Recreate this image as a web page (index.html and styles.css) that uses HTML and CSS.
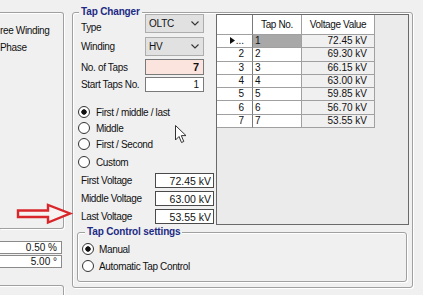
FILE: index.html
```html
<!DOCTYPE html>
<html lang="en">
<head>
    <meta charset="UTF-8">
    <title>Tap Changer</title>
    <link rel="stylesheet" href="styles.css">
</head>
<body>
<div class="screen">
    <div class="side">
        <div class="side-box side-top">
            <div class="side-opt">ree Winding</div>
            <div class="side-opt">Phase</div>
        </div>
        <div class="side-fields">
            <input class="side-input" type="text" value="0.50 %" readonly>
            <input class="side-input" type="text" value="5.00 °" readonly>
        </div>
        <div class="side-box side-low"></div>
    </div>

    <div class="group tap-changer">
        <div class="group-title">Tap Changer</div>
        <div class="tc-body">
            <div class="tc-form">
                <div class="field f-type">
                    <span class="field-label">Type</span>
                    <div class="sel">OLTC
                        <svg width="8" height="5" viewBox="0 0 8 5"><path d="M0.5 0.5 L4 4 L7.5 0.5" fill="none" stroke="#333" stroke-width="1.1"/></svg>
                    </div>
                </div>
                <div class="field f-winding">
                    <span class="field-label">Winding</span>
                    <div class="sel">HV
                        <svg width="8" height="5" viewBox="0 0 8 5"><path d="M0.5 0.5 L4 4 L7.5 0.5" fill="none" stroke="#333" stroke-width="1.1"/></svg>
                    </div>
                </div>
                <div class="field f-taps">
                    <span class="field-label">No. of Taps</span>
                    <input class="num num-hi" type="text" value="7" readonly>
                </div>
                <div class="field f-start">
                    <span class="field-label">Start Taps No.</span>
                    <input class="num" type="text" value="1" readonly>
                </div>

                <div class="options">
                    <label class="radio"><input type="radio" name="mode" checked>First / middle / last</label>
                    <label class="radio"><input type="radio" name="mode">Middle</label>
                    <label class="radio"><input type="radio" name="mode">First / Second</label>
                    <label class="radio opt-custom"><input type="radio" name="mode">Custom</label>
                </div>

                <div class="vfield">
                    <span class="vfield-label">First Voltage</span>
                    <input class="volt" type="text" value="72.45 kV" readonly>
                </div>
                <div class="vfield">
                    <span class="vfield-label">Middle Voltage</span>
                    <input class="volt" type="text" value="63.00 kV" readonly>
                </div>
                <div class="vfield">
                    <span class="vfield-label">Last Voltage</span>
                    <input class="volt" type="text" value="53.55 kV" readonly>
                </div>
            </div>

            <div class="grid-box">
                <table class="grid">
                    <thead>
                        <tr>
                            <th class="c-row"></th>
                            <th class="c-tap">Tap No.</th>
                            <th class="c-volt">Voltage Value</th>
                        </tr>
                    </thead>
                    <tbody>
                        <tr>
                            <td class="c-row"><svg class="row-mark" width="5" height="7" viewBox="0 0 5 7"><path d="M0 0 L5 3.5 L0 7 Z" fill="#111"/></svg>...</td>
                            <td class="c-tap selected">1</td>
                            <td class="c-volt">72.45 kV</td>
                        </tr>
                        <tr><td class="c-row">2</td><td class="c-tap">2</td><td class="c-volt">69.30 kV</td></tr>
                        <tr><td class="c-row">3</td><td class="c-tap">3</td><td class="c-volt">66.15 kV</td></tr>
                        <tr><td class="c-row">4</td><td class="c-tap">4</td><td class="c-volt">63.00 kV</td></tr>
                        <tr><td class="c-row">5</td><td class="c-tap">5</td><td class="c-volt">59.85 kV</td></tr>
                        <tr><td class="c-row">6</td><td class="c-tap">6</td><td class="c-volt">56.70 kV</td></tr>
                        <tr><td class="c-row">7</td><td class="c-tap">7</td><td class="c-volt">53.55 kV</td></tr>
                    </tbody>
                </table>
            </div>
        </div>

        <div class="group tap-control">
            <div class="group-title">Tap Control settings</div>
            <label class="radio r-manual"><input type="radio" name="ctrl" checked>Manual</label>
            <label class="radio r-auto"><input type="radio" name="ctrl">Automatic Tap Control</label>
        </div>
    </div>

    <!-- annotation arrow -->
    <svg class="red-arrow" width="58" height="22" viewBox="0 0 58 22">
        <path d="M2 7.5 L32 7.5 L32 2 L54 10.5 L32 19.5 L32 14 L2 14 Z" fill="#f7f3f3" stroke="#d8262b" stroke-width="2.4" stroke-linejoin="miter"/>
    </svg>

    <!-- mouse pointer -->
    <svg class="pointer" width="13" height="19" viewBox="0 0 13 19">
        <path d="M0.5 0.5 L0.5 15 L4 11.5 L6.5 17.5 L8.8 16.5 L6.3 10.6 L11 10.6 Z" fill="#fff" stroke="#333" stroke-width="1"/>
    </svg>
</div>
</body>
</html>
```

FILE: styles.css
```css
body {
    margin: 0;
    background-color: #f0f0f0;
    font-family: "Liberation Sans", Arial, sans-serif;
    font-size: 10px;
    color: #111;
}
.screen {
    position: relative;
    display: flex;
    width: 423px;
    height: 295px;
    overflow: hidden;
}

/* left column, cut by the window edge */
.side {
    flex: none;
    width: 64px;
}
.side-box {
    box-sizing: border-box;
    border: 1px solid #a0a0a0;
    border-left: none;
    border-radius: 0 3px 3px 0;
    box-shadow: inset 0 1px 0 #fff, 1px 1px 0 #fff;
}
.side-top {
    margin-top: 12px;
    height: 217px;
}
.side-opt {
    line-height: 12px;
    letter-spacing: -0.35px;
    margin-top: 5px;
}
.side-opt:first-child {
    margin-top: 12px;
}
.side-fields {
    display: flex;
    flex-direction: column;
    gap: 1px;
    margin-top: 12px;
}
.side-input {
    box-sizing: border-box;
    width: 62px;
    height: 13px;
    margin: 0;
    padding: 0 4px 0 0;
    border: 1px solid #8a8a8a;
    border-left: none;
    background-color: #fff;
    font: inherit;
    text-align: right;
    color: #111;
}
.side-low {
    margin-top: 17px;
    height: 30px;
}

/* group boxes */
.group {
    box-sizing: border-box;
    border: 1px solid #a0a0a0;
    border-radius: 3px;
    box-shadow: inset 1px 1px 0 #fff, 1px 1px 0 #fff;
}
.group-title {
    width: fit-content;
    margin: -7px 0 -5px 6px;
    padding: 0 2px;
    line-height: 12px;
    font-weight: bold;
    letter-spacing: -0.15px;
    color: #1d2b85;
    background-color: #f0f0f0;
}
.tap-changer {
    flex: none;
    width: 341px;
    height: 276px;
    margin: 12px 0 0 8px;
}
.tc-body {
    display: flex;
    height: 212px;
}
.tc-form {
    box-sizing: border-box;
    width: 143px;
}

.field {
    display: flex;
    align-items: center;
    padding-left: 8px;
}
.field-label {
    width: 64px;
    letter-spacing: -0.35px;
}
.f-type {
    margin-top: 1px;
}
.f-type .field-label {
    align-self: flex-end;
}
.f-winding {
    margin-top: 4px;
}
.f-taps {
    margin-top: 3px;
}
.f-start {
    margin-top: 2px;
}
.sel {
    box-sizing: border-box;
    display: flex;
    align-items: center;
    justify-content: space-between;
    width: 59px;
    height: 19px;
    padding: 0 4px 0 3px;
    border: 1px solid #adadad;
    background-color: #e1e1e1;
    letter-spacing: -0.2px;
}
.num {
    box-sizing: border-box;
    width: 59px;
    height: 16px;
    margin: 0;
    padding: 0 4px;
    border: 1px solid #7a7a7a;
    background-color: #fff;
    font: inherit;
    text-align: right;
    color: #111;
}
.num-hi {
    background-color: #fbe3de;
    font-weight: bold;
    font-size: 11px;
}
.f-start .num {
    height: 15px;
}

.options {
    margin-top: 12px;
}
.radio {
    display: flex;
    align-items: center;
    gap: 6px;
    height: 16px;
    padding-left: 5px;
    letter-spacing: -0.35px;
}
.radio input {
    appearance: none;
    box-sizing: border-box;
    width: 12px;
    height: 12px;
    margin: 0;
    border: 1px solid #333;
    border-radius: 50%;
    background-color: #fff;
}
.radio input:checked {
    background: radial-gradient(circle, #111 0 2.4px, #fff 3px);
}
.opt-custom {
    margin-top: 2px;
}

.vfield {
    display: flex;
    align-items: center;
    padding-left: 8px;
    margin-top: 3px;
}
.vfield:first-of-type {
    margin-top: 0;
}
.vfield-label {
    width: 74px;
    letter-spacing: -0.35px;
}
.volt {
    box-sizing: border-box;
    width: 59px;
    height: 15px;
    margin: 0;
    padding: 0 2px;
    border: 1px solid #4a4a4a;
    background-color: #fff;
    font: inherit;
    font-size: 10.5px;
    text-align: right;
    color: #111;
}

/* data grid */
.grid-box {
    box-sizing: border-box;
    width: 193px;
    height: 211px;
    margin-top: 1px;
    border: 1px solid #6a6a6a;
    background-color: #ebebeb;
}
.grid {
    border-collapse: separate;
    border-spacing: 0;
    table-layout: fixed;
    width: 158px;
}
.grid th,
.grid td {
    box-sizing: border-box;
    padding: 0;
    border-right: 1px solid #a0a0a0;
    border-bottom: 1px solid #a0a0a0;
    background-color: #fff;
    font-weight: normal;
    white-space: nowrap;
    overflow: hidden;
}
.grid th {
    height: 20px;
    text-align: center;
    letter-spacing: -0.35px;
}
.grid td {
    height: 13.3px;
    line-height: 12px;
}
.c-row {
    width: 36px;
    text-align: right;
    padding-right: 8px !important;
    border-right-color: #7a7a7a !important;
}
.c-tap {
    width: 49px;
}
td.c-tap {
    padding-left: 2px !important;
}
.c-volt {
    width: 73px;
}
td.c-volt {
    text-align: right;
    padding-right: 7px !important;
    background-color: #f0f0f0 !important;
}
td.selected {
    background-color: #a8a8a8;
}
.row-mark {
    margin-right: 1px;
}

/* tap control settings */
.tap-control {
    height: 50px;
    margin: 7px 5px 0 4px;
}
.tap-control .group-title {
    margin-left: 7px;
}
.tap-control .radio {
    gap: 5px;
    padding-left: 4px;
}
.r-manual {
    margin-top: 8px;
}
.r-auto {
    margin-top: 1px;
}

/* overlays */
.red-arrow {
    position: absolute;
    left: 16px;
    top: 203px;
}
.pointer {
    position: absolute;
    left: 175px;
    top: 125px;
}
```
